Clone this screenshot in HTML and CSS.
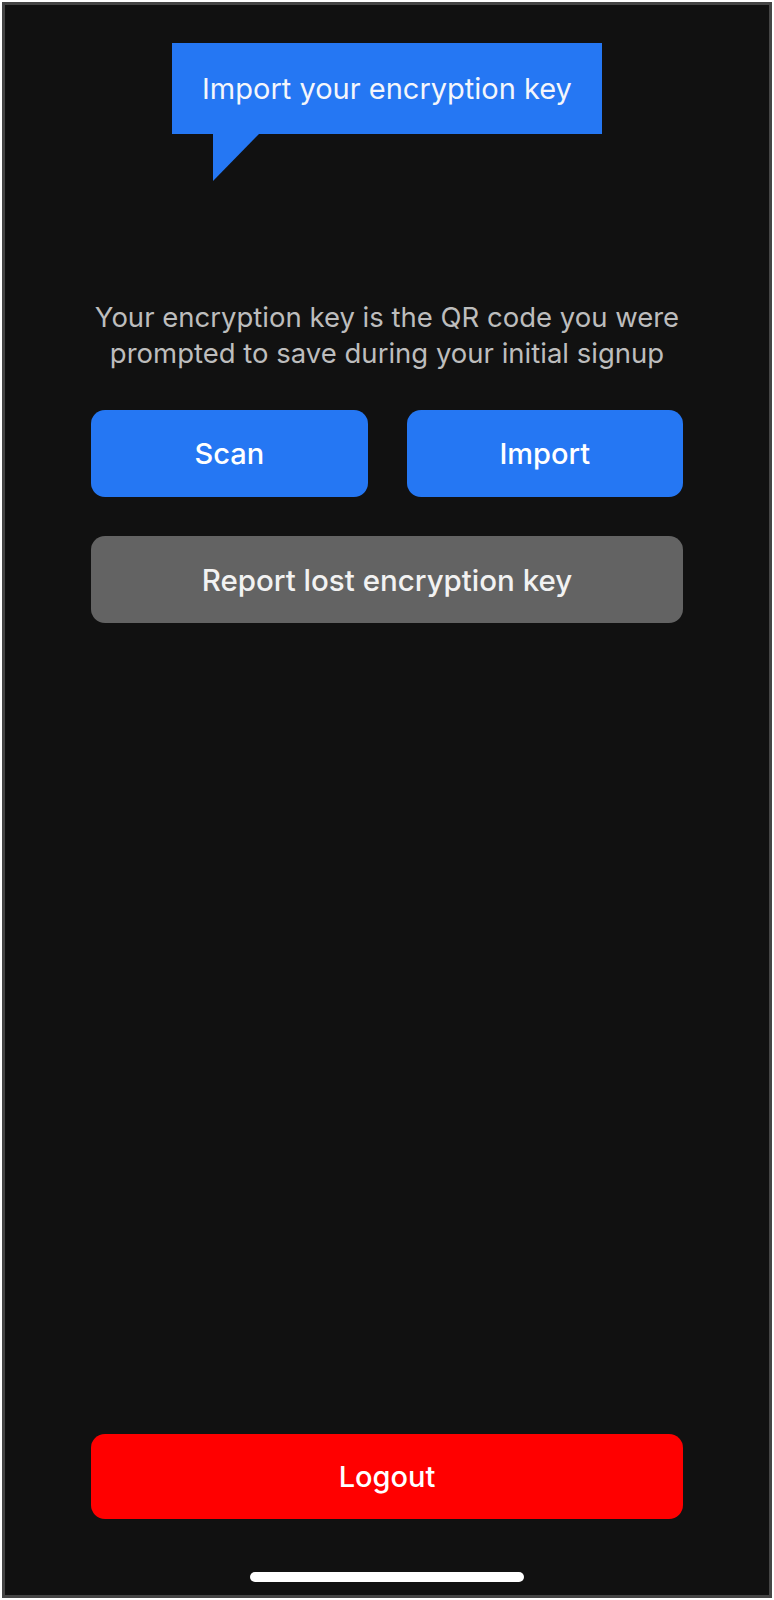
FILE: index.html
```html
<!DOCTYPE html>
<html lang="en">
<head>
  <meta charset="UTF-8">
  <meta name="viewport" content="width=device-width, initial-scale=1.0">
  <title>Import encryption key</title>
  <link rel="stylesheet" href="styles.css">
</head>
<body>
  <div class="phone">
    <div class="bubble">Import your encryption key</div>

    <p class="hint">Your encryption key is the QR code you were prompted to save during your initial signup</p>

    <div class="actions">
      <button class="btn btn-blue">Scan</button>
      <button class="btn btn-blue">Import</button>
      <button class="btn btn-grey wide">Report lost encryption key</button>
    </div>

    <button class="btn btn-red logout">Logout</button>

    <div class="home-bar"></div>
  </div>
</body>
</html>
```

FILE: styles.css
```css
body {
  margin: 0;
  background-color: #fff;
  font-family: Inter, "Noto Sans", sans-serif;
}

.phone {
  margin: 2px;
  height: 1590px;
  border: 3px solid #454545;
  background-color: #111;
  display: flex;
  flex-direction: column;
  align-items: center;
}

.bubble {
  position: relative;
  margin-top: 38px;
  width: 430px;
  height: 91px;
  background-color: #2577f3;
  color: #f4f6fb;
  font-size: 29px;
  display: flex;
  align-items: center;
  justify-content: center;
}

.bubble::after {
  content: "";
  position: absolute;
  left: 41px;
  top: 91px;
  width: 46px;
  height: 47px;
  background-color: #2577f3;
  clip-path: polygon(0 0, 100% 0, 0 100%);
}

.hint {
  margin: 165px 0 0;
  width: 620px;
  text-align: center;
  color: #bdbdbd;
  font-size: 27.5px;
  line-height: 36px;
}

.actions {
  margin-top: 39px;
  width: 592px;
  display: grid;
  grid-template-columns: 1fr 1fr;
  gap: 39px;
}

.btn {
  height: 87px;
  border: none;
  border-radius: 14px;
  color: #fff;
  font-family: inherit;
  font-size: 29px;
  font-weight: 500;
}

.btn-blue {
  background-color: #2577f3;
}

.btn-grey {
  background-color: #636363;
  color: #f2f2f2;
  font-size: 29.5px;
}

.btn-red {
  background-color: #ff0000;
}

.wide {
  grid-column: 1 / 3;
}

.logout {
  margin-top: auto;
  width: 592px;
  height: 85px;
}

.home-bar {
  margin: 53px 0 13px;
  width: 274px;
  height: 10px;
  border-radius: 5px;
  background-color: #fff;
}
```
